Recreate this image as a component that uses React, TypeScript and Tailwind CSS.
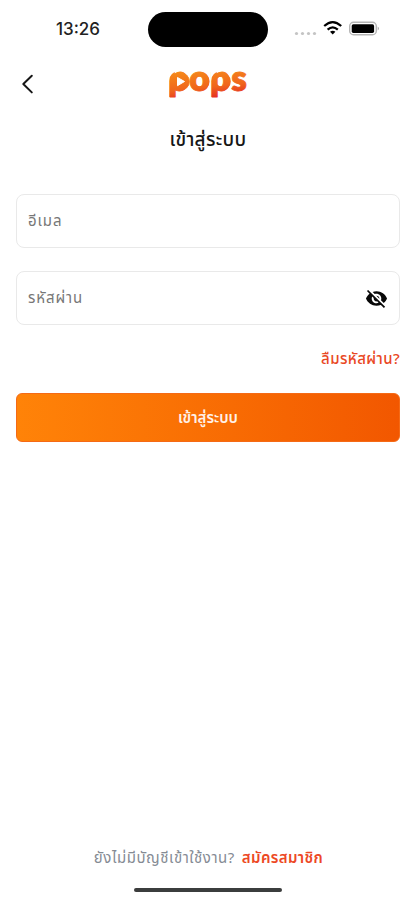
import React from "react";

const thai = "font-['Noto_Sans_Thai','Noto_Sans',sans-serif]";

function StatusBar() {
  return (
    <div className="flex h-[58px] items-center">
      <span className="ml-[56px] w-[92px] font-['Inter'] text-[17px] font-medium leading-[20px] text-[#222]">13:26</span>
      <div className="h-[35px] w-[120px] rounded-full bg-black" />
      <svg className="ml-[26px]" width="88" height="24" viewBox="294 17 88 24">
        <g fill="#c4c4c4">
          <circle cx="296.5" cy="33.5" r="1.6" />
          <circle cx="302.5" cy="33.5" r="1.6" />
          <circle cx="308.5" cy="33.5" r="1.6" />
          <circle cx="314.5" cy="33.5" r="1.6" />
        </g>
        <g fill="none" stroke="#000" strokeWidth="2.2">
          <path d="M324.2 26Q332.7 18.2 341.2 26" />
          <path d="M327.6 29.6Q332.7 25 337.8 29.6" />
        </g>
        <path d="M330 31.7Q332.7 29.6 335.4 31.7L332.7 34.6Z" />
        <rect x="349.7" y="22.3" width="26.6" height="12.4" rx="3.8" fill="none" stroke="#b5b5b5" strokeWidth="1.4" />
        <rect x="351.7" y="24.3" width="22.4" height="8.6" rx="1.6" />
        <path d="M377.7 26.5Q380.3 28.5 377.7 30.5Z" fill="#aaa" />
      </svg>
    </div>
  );
}

function Logo() {
  return (
    <svg className="overflow-visible" width="84" height="50" viewBox="165.5 58.5 84 50" role="img" aria-label="pops">
      <defs>
        <linearGradient id="brand" gradientUnits="userSpaceOnUse" x1="203" y1="70" x2="206" y2="98">
          <stop offset="0" stopColor="#f5871a" />
          <stop offset="0.6" stopColor="#f0651c" />
          <stop offset="1" stopColor="#e5301f" />
        </linearGradient>
        <clipPath id="rounded">
          <rect x="168.5" y="70.5" width="22" height="21" rx="10" />
          <rect x="168.5" y="80" width="22" height="17.5" rx="1.5" />
          <rect x="189" y="66" width="21.5" height="35" />
          <rect x="210.5" y="70.5" width="21" height="21" rx="10" />
          <rect x="210.5" y="80" width="20" height="17.5" rx="1.5" />
          <rect x="230.5" y="66" width="20" height="35" />
        </clipPath>
      </defs>
      <g clipPath="url(#rounded)" fill="url(#brand)" stroke="url(#brand)" strokeWidth="0.9" strokeLinejoin="round" fontFamily="Lato" fontWeight="800" fontSize="35">
        <text y="90.2"><tspan x="167.5">p</tspan><tspan x="188.8">o</tspan><tspan x="209.5">p</tspan><tspan x="230.8">s</tspan></text>
        <circle cx="179.8" cy="81" r="9" />
        <circle cx="199.5" cy="81" r="7.2" fill="none" strokeWidth="4.6" />
        <circle cx="220.8" cy="81" r="7.2" fill="none" strokeWidth="4.6" />
      </g>
      <path d="M177 77L184 81L177 85.2Z" fill="#fff" stroke="#fff" strokeLinejoin="round" />
    </svg>
  );
}

export default function App() {
  return (
    <main className={`flex h-[900px] w-[415px] flex-col overflow-hidden bg-white ${thai}`}>
      <StatusBar />
      <header className="grid h-[52px] grid-cols-[84px_1fr_84px] items-center">
        <svg className="ml-[20px]" width="16" height="22" viewBox="0 0 16 22" fill="none" stroke="#161616" strokeWidth="2" strokeLinecap="round" strokeLinejoin="round">
          <path d="M11.8 2.8L3.3 11L11.8 19.4" />
        </svg>
        <div className="flex justify-center"><Logo /></div>
      </header>
      <h1 className="mt-[17px] h-[28px] pl-px text-center text-[19px] font-medium leading-[28px] tracking-[0.3px] text-[#161616]">เข้าสู่ระบบ</h1>
      <form className="mx-[16px] mt-[39px] flex flex-col">
        <div className="flex h-[54px] w-[384px] items-center rounded-[8px] border border-[#e9e9e9] px-[11px]">
          <span className="pt-[2px] text-[15px] leading-[22px] tracking-[0.9px] text-[#777]">อีเมล</span>
        </div>
        <div className="mt-[23px] flex h-[54px] w-[384px] items-center justify-between rounded-[8px] border border-[#e9e9e9] px-[11px]">
          <span className="pt-[2px] text-[15px] leading-[22px] tracking-[0.9px] text-[#777]">รหัสผ่าน</span>
          <svg width="23" height="23" viewBox="0 0 24 24" fill="#080808">
            <path d="M12 7c2.76 0 5 2.24 5 5 0 .65-.13 1.26-.36 1.83l2.92 2.92c1.51-1.26 2.7-2.89 3.43-4.75-1.73-4.39-6-7.5-11-7.5-1.4 0-2.74.25-3.98.7l2.16 2.16C10.74 7.13 11.35 7 12 7zM2 4.27l2.28 2.28.46.46C3.08 8.3 1.78 10.02 1 12c1.73 4.39 6 7.5 11 7.5 1.55 0 3.03-.3 4.38-.84l.42.42L19.73 22 21 20.73 3.27 3 2 4.27zM7.53 9.8l1.55 1.55c-.05.21-.08.43-.08.65 0 1.66 1.34 3 3 3 .22 0 .44-.03.65-.08l1.55 1.55c-.67.33-1.41.53-2.2.53-2.76 0-5-2.24-5-5 0-.79.2-1.53.53-2.2zm4.31-.78l3.15 3.15.02-.16c0-1.66-1.34-3-3-3l-.17.01z" />
          </svg>
        </div>
        <a className="mt-[23px] -mr-px h-[24px] self-end text-[15px] font-medium leading-[24px] tracking-[0.4px] text-[#e94824]">ลืมรหัสผ่าน?</a>
        <button type="button" className="mt-[21px] flex h-[49px] w-[384px] items-center justify-center rounded-[6px] border border-[#f56a16] bg-linear-to-r from-[#ff8308] to-[#f25700] pt-[3px] text-[15px] font-semibold text-[#fff1e8]">เข้าสู่ระบบ</button>
      </form>
      <footer className="mt-auto flex h-[57px] flex-col items-center">
        <p className="mt-[2px] flex h-[28px] items-center gap-[7px] pl-[2px] text-[15px] leading-[28px]">
          <span className="tracking-[0.55px] text-[#858b94]">ยังไม่มีบัญชีเข้าใช้งาน?</span>
          <a className="font-semibold tracking-[0.35px] text-[#ed4824]">สมัครสมาชิก</a>
        </p>
        <div className="mt-[15px] h-[4px] w-[148px] rounded-full bg-[#3b3d3d]" />
      </footer>
    </main>
  );
}
